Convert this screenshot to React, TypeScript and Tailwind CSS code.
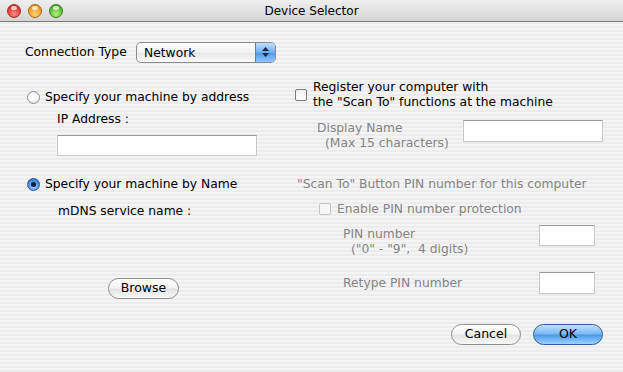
import React from "react";

const stripes =
  "bg-[repeating-linear-gradient(to_bottom,#ececec_0px,#ececec_2px,#f4f4f4_2px,#f4f4f4_4px)]";

const Light: React.FC<{ color: string }> = ({ color }) => (
  <div className={`relative w-[14px] h-[14px] rounded-full border ${color}`}>
    <div className="absolute left-[3px] top-[1px] w-[6px] h-[4px] rounded-full bg-white/70" />
  </div>
);

const Radio: React.FC<{ checked?: boolean }> = ({ checked }) =>
  checked ? (
    <div className="w-[13px] h-[13px] rounded-full border border-[#2c4f86] bg-[radial-gradient(circle_at_50%_70%,#9fd0ff,#4a8fe0_60%,#2a68c0)] flex items-center justify-center">
      <div className="w-[5px] h-[5px] rounded-full bg-[#0d1f3a]" />
    </div>
  ) : (
    <div className="w-[13px] h-[13px] rounded-full border border-[#8c8c8c] bg-[linear-gradient(to_bottom,#f2f2f2,#ffffff_60%,#e4e4e4)]" />
  );

const Check: React.FC<{ disabled?: boolean }> = ({ disabled }) => (
  <div
    className={`w-[12px] h-[12px] shrink-0 rounded-[2px] border ${
      disabled ? "border-[#c4c4c4] bg-[#f6f6f6]" : "border-[#7a7a7a] bg-[linear-gradient(to_bottom,#f0f0f0,#ffffff)]"
    }`}
  />
);

const Field: React.FC<{ className: string }> = ({ className }) => (
  <div className={`shrink-0 bg-white border border-[#c8c8c8] border-t-[#9a9a9a] ${className}`} />
);

const PillButton: React.FC<{ label: string; primary?: boolean; className?: string }> = ({
  label,
  primary,
  className,
}) => (
  <div
    className={`h-[21px] rounded-full flex items-center justify-center text-[12.5px] border ${
      primary
        ? "border-[#2f5a9c] bg-[linear-gradient(to_bottom,#c3e0fb,#77b7f2_48%,#4a98ea_52%,#9cd2ff)]"
        : "border-[#8e8e8e] bg-[linear-gradient(to_bottom,#ffffff,#f3f3f3_48%,#e2e2e2_52%,#fafafa)]"
    } ${className ?? ""}`}
  >
    {label}
  </div>
);

const App: React.FC = () => {
  return (
    <div className="w-[623px] h-[372px] flex flex-col font-['DejaVu_Sans',sans-serif] text-[12.3px] text-black overflow-hidden">
      {/* title bar */}
      <div className="h-[22px] shrink-0 relative flex items-center bg-[linear-gradient(to_bottom,#efefef,#d4d4d4)] border-b border-[#7c7c7c]">
        <div className="flex gap-[7px] pl-[7px]">
          <Light color="border-[#9c2e2a] bg-[radial-gradient(circle_at_50%_75%,#ff8a80,#e0463f_55%,#a82b25)]" />
          <Light color="border-[#a8661a] bg-[radial-gradient(circle_at_50%_75%,#ffd27a,#f5a52a_55%,#c27414)]" />
          <Light color="border-[#3d7a22] bg-[radial-gradient(circle_at_50%_75%,#b2f080,#62c23c_55%,#3b8a20)]" />
        </div>
        <div className="absolute inset-0 flex items-center justify-center text-[12px]">Device Selector</div>
      </div>

      {/* body */}
      <div className={`flex-1 ${stripes} pl-[25px] pr-[20px] pt-[19px]`}>
        <div className="flex items-center h-[22px]">
          <span className="w-[111px]">Connection Type</span>
          <div className="w-[140px] h-[21px] rounded-[5px] border border-[#8a8a8a] flex overflow-hidden bg-[linear-gradient(to_bottom,#ffffff,#f1f1f1_50%,#e6e6e6_51%,#fbfbfb)]">
            <span className="flex-1 pl-[7px] leading-[20px]">Network</span>
            <div className="w-[20px] border-l border-[#5b7fb5] bg-[linear-gradient(to_bottom,#bfe0ff,#6eaef0_50%,#4e95e4_51%,#8ec8ff)] flex flex-col items-center justify-center gap-[2px]">
              <svg width="7" height="4" viewBox="0 0 7 4"><path d="M0 4L3.5 0L7 4Z" fill="#1a2a44" /></svg>
              <svg width="7" height="4" viewBox="0 0 7 4"><path d="M0 0L3.5 4L7 0Z" fill="#1a2a44" /></svg>
            </div>
          </div>
        </div>

        <div className="grid grid-cols-[268px_1fr] mt-[17px]">
          {/* left column */}
          <div className="flex flex-col">
            <div className="mt-[9px] h-[16px] flex items-center pl-[2px] gap-[5px]">
              <Radio />
              <span>Specify your machine by address</span>
            </div>
            <div className="mt-[6px] h-[16px] leading-[16px] pl-[32px]">IP Address :</div>
            <Field className="mt-[8px] ml-[32px] w-[200px] h-[21px]" />
            <div className="mt-[20px] h-[16px] flex items-center pl-[2px] gap-[5px]">
              <Radio checked />
              <span>Specify your machine by Name</span>
            </div>
            <div className="mt-[11px] h-[16px] leading-[16px] pl-[33px]">mDNS service name :</div>
            <PillButton label="Browse" className="mt-[59px] ml-[83px] w-[71px]" />
          </div>

          {/* right column */}
          <div className="flex flex-col">
            <div className="flex items-center h-[30px] pl-[2px]">
              <Check />
              <div className="ml-[6px] leading-[15px] whitespace-nowrap">
                <div>Register your computer with</div>
                <div>the "Scan To" functions at the machine</div>
              </div>
            </div>
            <div className="mt-[10px] h-[30px] flex text-[#858585]">
              <div className="w-[170px] shrink-0 pl-[24px] leading-[15px] pt-[1px] whitespace-nowrap">
                <div>Display Name</div>
                <div className="pl-[8px]">(Max 15 characters)</div>
              </div>
              <Field className="w-[140px] h-[22px]" />
            </div>
            <div className="mt-[26px] h-[16px] leading-[16px] pl-[4px] text-[#858585] whitespace-nowrap">
              "Scan To" Button PIN number for this computer
            </div>
            <div className="mt-[9px] h-[16px] flex items-center pl-[26px] gap-[6px] text-[#858585]">
              <Check disabled />
              <span>Enable PIN number protection</span>
            </div>
            <div className="mt-[8px] h-[32px] flex text-[#858585]">
              <div className="w-[246px] shrink-0 pl-[50px] leading-[15px] pt-[2px] whitespace-pre">
                <div>PIN number</div>
                <div className="pl-[8px]">("0" - "9",  4 digits)</div>
              </div>
              <Field className="w-[56px] h-[21px]" />
            </div>
            <div className="mt-[15px] h-[22px] flex items-center text-[#858585]">
              <div className="w-[246px] shrink-0 pl-[50px]">Retype PIN number</div>
              <Field className="w-[56px] h-[22px]" />
            </div>
          </div>
        </div>

        <div className="mt-[25px] flex justify-end gap-[12px]">
          <PillButton label="Cancel" className="w-[70px]" />
          <PillButton label="OK" primary className="w-[70px]" />
        </div>
      </div>
    </div>
  );
};

export default App;
